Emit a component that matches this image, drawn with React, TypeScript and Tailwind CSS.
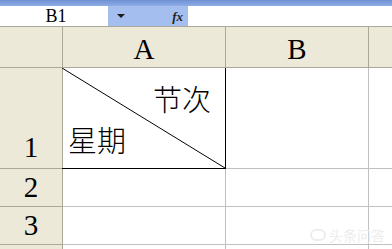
import * as React from 'react';

const serif = { fontFamily: '"Liberation Serif", "Noto Sans CJK SC", serif' };

function RowHead({ label, align = 'center' }: { label: string; align?: 'center' | 'end' }) {
    return (
        <div
            className={`bg-[#ECE9D8] border-r border-b border-[#ACA899] flex justify-center text-[29px] leading-none text-black ${
                align === 'end' ? 'items-end pb-[6px]' : 'items-center'
            }`}
            style={serif}
        >
            {label}
        </div>
    );
}

export default function App() {
    return (
        <div className="w-[392px] h-[249px] overflow-hidden bg-white relative" style={serif}>
            {/* toolbar strip */}
            <div className="h-[6px] bg-gradient-to-b from-[#6E90D4] to-[#8FAEE6]" />

            {/* name box + formula bar */}
            <div className="h-[21px] flex border-b border-[#ACA899]">
                <div className="w-[108px] bg-white flex items-center justify-center text-[18px] leading-none pl-[4px]">B1</div>
                <div className="w-[80px] bg-[#A5BEF0] flex items-center justify-between pl-[9px] pr-[5px]">
                    <svg width="8" height="5" viewBox="0 0 8 5">
                        <path d="M0 0 L8 0 L4 4 Z" fill="#1a1a1a" />
                    </svg>
                    <span className="italic text-[13px] leading-none font-bold text-[#222]" style={serif}>
                        fx
                    </span>
                </div>
                <div className="flex-1 bg-white" />
            </div>

            {/* sheet grid */}
            <div className="grid grid-cols-[63px_163px_143px_1fr] grid-rows-[41px_101px_38px_38px_20px]">
                {/* header row */}
                <div className="bg-[#ECE9D8] border-r border-b border-[#ACA899]" />
                <div className="bg-[#ECE9D8] border-r border-b border-[#ACA899] flex items-center justify-center pt-[4px] text-[29px] leading-none">A</div>
                <div className="bg-[#ECE9D8] border-r border-b border-[#ACA899] flex items-center justify-center pt-[4px] text-[29px] leading-none">B</div>
                <div className="bg-[#ECE9D8] border-b border-[#ACA899]" />

                {/* row 1 */}
                <RowHead label="1" align="end" />
                <div className="relative border-r border-b border-black -ml-px pl-px">
                    <svg className="absolute inset-0 w-full h-full" viewBox="0 0 163 101" preserveAspectRatio="none">
                        <line x1="0" y1="0" x2="163" y2="101" stroke="#000" strokeWidth="1" />
                    </svg>
                    <div className="relative h-full flex flex-col justify-between pt-[19px] pb-[11px] pl-[5px] pr-[14px] text-[29px] leading-none font-light">
                        <div className="text-right">节次</div>
                        <div className="text-left">星期</div>
                    </div>
                </div>
                <div className="border-r border-b border-[#C0C0C0]" />
                <div className="border-b border-[#C0C0C0]" />

                {/* row 2 */}
                <RowHead label="2" />
                <div className="border-r border-b border-[#C0C0C0]" />
                <div className="border-r border-b border-[#C0C0C0]" />
                <div className="border-b border-[#C0C0C0]" />

                {/* row 3 */}
                <RowHead label="3" />
                <div className="border-r border-b border-[#C0C0C0]" />
                <div className="border-r border-b border-[#C0C0C0]" />
                <div className="border-b border-[#C0C0C0]" />

                {/* row 4 (cut off) */}
                <div className="bg-[#ECE9D8] border-r border-[#ACA899]" />
                <div className="border-r border-[#C0C0C0]" />
                <div className="border-r border-[#C0C0C0]" />
                <div />
            </div>

            {/* faint watermark */}
            <div className="absolute right-[7px] bottom-[7px] flex items-center gap-[3px] text-[#EDEDED] text-[14px] leading-none" style={{ fontFamily: '"Noto Sans CJK SC", sans-serif' }}>
                <span className="w-[16px] h-[12px] rounded-full border-2 border-[#EDEDED]" />
                <span>头条问答</span>
            </div>
        </div>
    );
}
